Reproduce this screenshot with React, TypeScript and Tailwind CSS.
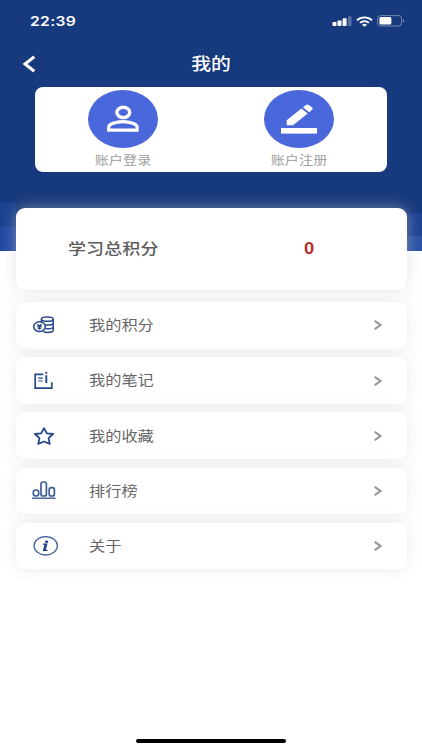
import type { ReactNode } from 'react';

type MenuItem = {
  label: string;
  icon: ReactNode;
};

const menuItems: MenuItem[] = [
  { label: '我的积分', icon: <CoinsIcon /> },
  { label: '我的笔记', icon: <NoteIcon /> },
  { label: '我的收藏', icon: <StarIcon /> },
  { label: '排行榜', icon: <RankIcon /> },
  { label: '关于', icon: <AboutIcon /> },
];

function CoinsIcon() {
  return (
    <svg viewBox="0 0 22 18" className="ml-[17.5px] w-[22px] h-[18px]" fill="none" stroke="#26478a" strokeWidth="1.5">
      <ellipse cx="14.3" cy="3.2" rx="5.9" ry="2.1" />
      <path d="M8.4 3.2v3M20.2 3.2v11.1c0 1.2-2.5 2.1-5.7 2.1-1.6 0-3-.2-4-.6M20.2 7c0 1.3-2.6 2.1-6 2.1-.8 0-1.5 0-2.1-.1M20.2 10.7c0 1.2-2.5 2-5.6 2-.7 0-1.4 0-2-.1" />
      <ellipse cx="6.5" cy="10.7" rx="5.8" ry="4.9" fill="white" />
      <path d="m4.5 8.2 2 2 2-2M4.3 10.4h4.4M4.5 12.1h4M6.5 10.3v3.4" strokeWidth="1.4" />
    </svg>
  );
}

function NoteIcon() {
  return (
    <svg viewBox="0 0 20 19" className="ml-[18px] w-5 h-[19px]" fill="none" stroke="#26478a" strokeWidth="1.7">
      <path d="M9.3 3.4H1.2v13.8h16.6v-5.9" />
      <path d="M4.2 7.1h4.6M4.2 10h4.6" strokeWidth="1.2" />
      <path d="M12.3.8v2M12.3 4.3v7.8" strokeWidth="1.9" />
    </svg>
  );
}

function StarIcon() {
  return (
    <svg viewBox="0 0 22 18" className="ml-[17px] w-[22px] h-[18px]" fill="none" stroke="#26478a" strokeWidth="1.8" strokeLinejoin="round">
      <path d="m11 1.1 2.8 5.2 6.3.7-4.6 4.1 1.3 5.8-5.8-2.4-5.8 2.4 1.3-5.8L1.9 7l6.3-.7z" />
    </svg>
  );
}

function RankIcon() {
  return (
    <svg viewBox="0 0 24 18" className="-mt-0.5 ml-4 w-6 h-[18px]" fill="none" stroke="#3d5d99" strokeWidth="1.7">
      <rect x="1.3" y="9" width="5.4" height="6" rx="2.4" />
      <rect x="9" y="1" width="5.4" height="14" rx="2" />
      <rect x="17.2" y="6.7" width="5.2" height="8.3" rx="2" />
      <path d="M0 17.2h23.6" strokeWidth="1.4" />
    </svg>
  );
}

function AboutIcon() {
  return (
    <svg viewBox="0 0 26 20" className="ml-[17px] w-[26px] h-5" fill="none" stroke="#4766a0" strokeWidth="1.3">
      <ellipse cx="12.7" cy="9.8" rx="11.7" ry="9.2" />
      <path d="M9.9 8.2h3.8l-1.7 6.1h2.6M9.9 14.4h2.6" stroke="#1d3f85" strokeWidth="1.2" />
      <path d="m12.7 8.3-1.6 6" stroke="#1d3f85" strokeWidth="2.1" />
      <ellipse cx="13.6" cy="5.7" rx="1.6" ry="1.2" fill="#1d3f85" stroke="none" />
    </svg>
  );
}

function StatusBar() {
  return (
    <div className="flex h-[42px] items-center justify-between pl-[30px] pr-[17px]">
      <span className="inline-block origin-left scale-x-[1.16] font-['Inter','Liberation_Sans',sans-serif] text-[13.5px] font-semibold tracking-[0.3px]">
        22:39
      </span>
      <div className="flex items-center">
        <svg viewBox="0 0 20 10" className="w-5 h-2.5" fill="white">
          <rect x=".5" y="6" width="4" height="4" rx=".8" />
          <rect x="5.5" y="4.4" width="4" height="5.6" rx=".8" />
          <rect x="10.6" y="2.3" width="4" height="7.7" rx=".8" />
          <rect x="15.8" y=".2" width="3.8" height="9.8" rx=".8" opacity=".28" />
        </svg>
        <svg viewBox="0 0 17 11" className="ml-1 w-[17px] h-[11px]" fill="none" stroke="white" strokeWidth="1.9">
          <path d="M1 4.3C5.2.4 11.8.4 16 4.3" />
          <path d="M4 6.9c2.6-2.3 6.4-2.3 9 0" />
          <path d="m6 8.7 2.5 2 2.5-2c-1.4-1.2-3.6-1.2-5 0z" fill="white" stroke="none" />
        </svg>
        <svg viewBox="0 0 28 12" className="ml-[4px] w-7 h-3" fill="none">
          <rect x=".6" y=".6" width="24" height="10.4" rx="3" stroke="white" strokeOpacity=".4" />
          <rect x="2.4" y="2.1" width="12" height="7.4" rx="1.6" fill="white" />
          <path d="M26.2 4c1.3.6 1.3 3 0 3.6z" fill="white" fillOpacity=".5" />
        </svg>
      </div>
    </div>
  );
}

function AccountAction({ label, children }: { label: string; children: ReactNode }) {
  return (
    <button className="flex flex-1 flex-col items-center pt-[2.5px]">
      <span className="flex h-[58px] w-[70px] items-center justify-center rounded-[50%] bg-[#4b67dc]">{children}</span>
      <span className="mt-1 inline-block scale-x-[1.18] text-[12px] leading-[18px] text-[#a0a0a0]">{label}</span>
    </button>
  );
}

export default function App() {
  return (
    <div className="relative flex min-h-[750px] w-[422px] flex-col overflow-hidden bg-white font-['Liberation_Sans','Noto_Sans_CJK_SC',sans-serif]">
      <header className="relative h-[250.5px] bg-[#17397d] text-white">
        <div className="absolute bottom-0 left-0 h-[49px] w-4 bg-linear-to-b from-[#19428f] from-50% to-[#2049a3] to-50%" />
        <div className="absolute bottom-0 right-0 h-[38px] w-4 bg-linear-to-b from-[#1d4290] from-60% to-[#2950a4] to-60%" />

        <StatusBar />

        <nav className="grid h-[45px] grid-cols-3 items-center px-[22px]">
          <svg viewBox="0 0 14 18" className="-mt-0.5 w-3.5 h-[18px]" fill="none" stroke="white" strokeWidth="3">
            <path d="M12.3 1.8 3 9l9.3 7.2" />
          </svg>
          <h1 className="scale-x-[1.2] text-center text-[16.5px] font-medium">我的</h1>
        </nav>

        <section className="ml-[35px] flex h-[84.5px] w-[351.5px] rounded-[8px] bg-white">
          <AccountAction label="账户登录">
            <svg viewBox="0 0 32 27" className="w-8 h-[27px]" fill="none" stroke="white" strokeWidth="3.4">
              <ellipse cx="16.3" cy="7.4" rx="6.4" ry="5.2" />
              <path d="M1.7 25.2v-3.1c0-3 7-5.5 14.2-5.5s14.2 2.5 14.2 5.5v3.1z" strokeWidth="3.2" />
            </svg>
          </AccountAction>
          <AccountAction label="账户注册">
            <svg viewBox="0 0 36 30" className="w-9 h-[30px]" fill="white">
              <path d="M5.7 21.3v-5L20.4 4.6l6.3 5L12 21.3zM22 3.3 25 .9c.9-.7 2-.7 2.8 0l3.3 2.6c.8.7.8 1.6 0 2.3l-2.8 2.4z" />
              <rect x="0" y="24" width="36" height="5.6" />
            </svg>
          </AccountAction>
        </section>
      </header>

      <main className="relative -mt-[43px] flex flex-col px-[15.5px]">
        <section className="mb-[12.5px] flex h-[82px] items-center rounded-[9px] bg-white pl-[52px] shadow-[0_0_15px_rgba(205,205,205,0.5)]">
          <span className="w-[236px] origin-left scale-x-[1.2] pt-0.5 text-[15px] font-medium tracking-[0.1px] text-[#5c5c5c]">学习总积分</span>
          <span className="inline-block origin-left scale-x-[1.15] pt-px text-[16px] font-bold text-[#b5312c]">0</span>
        </section>

        <ul className="flex flex-col gap-[8.5px]">
          {menuItems.map((item) => (
            <li
              key={item.label}
              className="flex h-[46.7px] items-center rounded-[9px] bg-white shadow-[0_0_15px_rgba(205,205,205,0.4)]"
            >
              <span className="w-[73.5px]">{item.icon}</span>
              <span className="inline-block origin-left scale-x-[1.2] pt-0.5 text-[13.5px] text-[#666]">{item.label}</span>
              <svg viewBox="0 0 8 10" className="ml-auto mr-[24.5px] w-2 h-2.5" fill="none" stroke="#999" strokeWidth="2.1">
                <path d="M.7.8 6.4 5 .7 9.2" />
              </svg>
            </li>
          ))}
        </ul>
      </main>

      <div className="mx-auto mt-auto mb-[7px] h-1 w-[150px] rounded-full bg-black" />
    </div>
  );
}
